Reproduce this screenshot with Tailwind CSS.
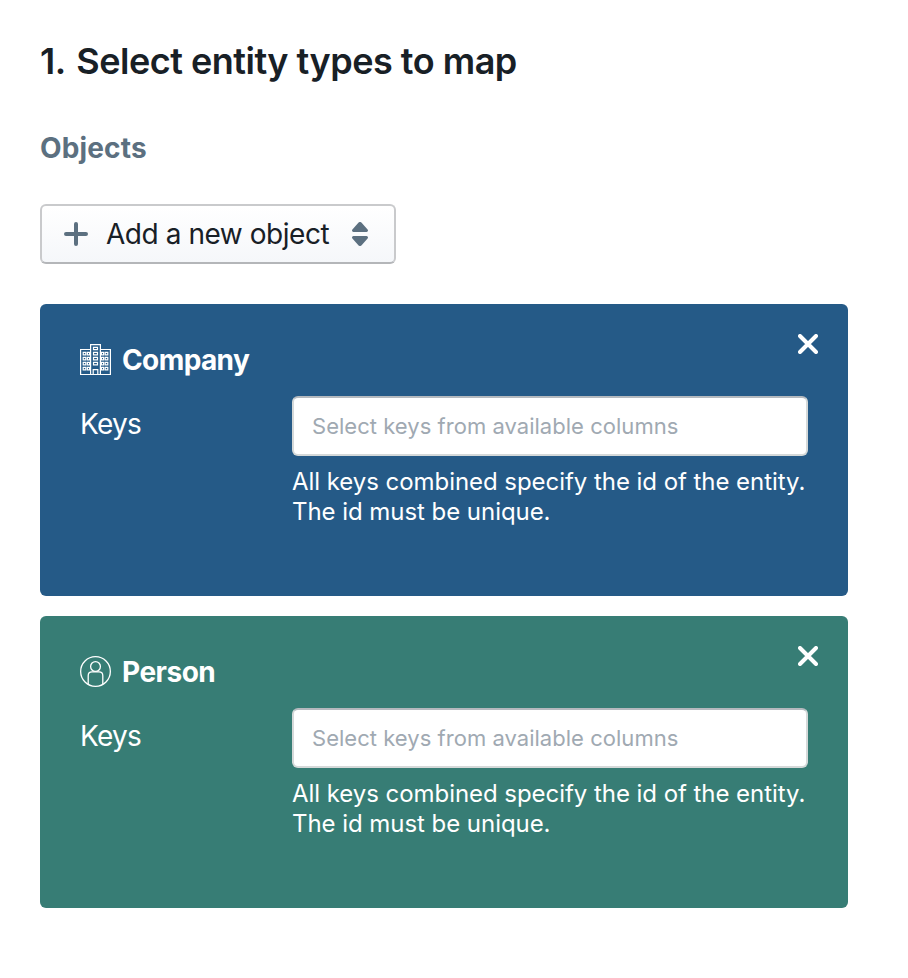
<!DOCTYPE html>
<html lang="en">
<head>
<meta charset="utf-8">
<title>Select entity types</title>
<script src="https://cdn.jsdelivr.net/npm/@tailwindcss/browser@4"></script>
</head>
<body class="bg-white font-['Inter',sans-serif] text-[#182026] antialiased">
<svg class="hidden">
  <symbol id="cross" viewBox="0 0 20 20"><path d="M2 2L18 18M18 2L2 18" fill="none" stroke="#fff" stroke-width="4" stroke-linecap="round"/></symbol>
</svg>
<main class="flex h-[978px] w-[908px] flex-col pt-[41px] pr-[60px] pl-10">
  <h1 class="h-10 text-[36px] leading-10 font-semibold tracking-[-0.5px] whitespace-nowrap"><span class="mr-[2px]">1.</span> Select entity types to map</h1>
  <h2 class="mt-[51px] h-8 text-[28px] leading-8 font-bold tracking-[0.15px] text-[#5c7080]">Objects</h2>
  <button class="mt-10 flex h-[60px] w-[356px] items-center rounded-md border-2 border-[#c9cacc] border-b-[#b4b6b9] bg-linear-to-b from-white to-[#f5f7fa] pl-[22px] text-[28px] leading-8">
    <svg class="size-6 shrink-0" viewBox="0 0 24 24"><path d="M2 12H22M12 2V22" stroke="#5c7080" stroke-width="4" stroke-linecap="round"/></svg>
    <span class="ml-[18px] w-[224px] text-left tracking-[-0.45px] whitespace-nowrap">Add a new object</span>
    <svg class="ml-[22px] h-6 w-4 shrink-0" viewBox="0 0 16 24"><path d="M1.5 10a1.5 1.5 0 0 1-1.1-2.5L6.6.6a2 2 0 0 1 2.8 0l6.2 6.9A1.5 1.5 0 0 1 14.500 10zM1.500 14a1.500 1.500 0 0 0-1.100 2.500l6.200 6.900a2 2 0 0 0 2.800 0l6.200-6.900A1.500 1.500 0 0 0 14.500 14z" fill="#5c7080"/></svg>
  </button>

  <section class="mt-10 flex h-[292px] flex-col rounded-md bg-[#255a87] px-10 pt-[30px] text-white">
    <div class="flex h-[62px] justify-between">
      <div class="flex h-[52px] items-center">
        <svg class="size-8 shrink-0" viewBox="0 0 32 32" fill="none" stroke="#fff" stroke-width="1.200">
          <path d="M10.500 5.500H.6V30.500H10.500M20.500 5.500H30.400V30.500H20.500"/>
          <path d="M10.600 30.500V.6H20.400V30.500ZM13.200 30V25.700H17.800V30"/>
          <path d="M3.200 8.300h2.600v2.600h-2.600zM7.400 8.300h2.200v2.600h-2.200zM3.200 13.300h2.600v2.600h-2.600zM7.400 13.300h2.200v2.600h-2.200zM3.200 18.300h2.600v2.600h-2.600zM7.400 18.300h2.200v2.600h-2.200zM3.200 23.300h2.600v2.600h-2.600zM7.400 23.300h2.200v2.600h-2.200zM21.400 8.300h2.200v2.600h-2.200zM25.200 8.300h2.600v2.600h-2.600zM21.400 13.300h2.200v2.600h-2.200zM25.200 13.300h2.600v2.600h-2.600zM21.400 18.300h2.200v2.600h-2.200zM25.200 18.300h2.600v2.600h-2.600zM21.400 23.300h2.200v2.600h-2.200zM25.200 23.300h2.600v2.600h-2.600z"/>
          <path d="M13.500 3.300h4v2.400h-4zM13.500 8.300h4v2.600h-4zM13.500 13.300h4v2.600h-4zM13.500 18.300h4v2.600h-4z"/>
        </svg>
        <h3 class="ml-2.5 text-[28px] leading-8 font-bold tracking-[-0.6px]">Company</h3>
      </div>
      <button aria-label="Remove Company" class="-mr-2.5 flex h-5"><svg class="size-5"><use href="#cross"/></svg></button>
    </div>
    <div class="flex">
      <div class="w-[212px] pt-3 text-[28px] leading-8 tracking-[-0.7px]">Keys</div>
      <div class="w-[516px]">
        <div class="flex h-[60px] items-center rounded-md border-2 border-[#d5d9d9] border-t-[#b5b9be] bg-white pl-[18px] text-[22px] leading-8 tracking-[0.03px] text-[#a0a9b2] whitespace-nowrap">Select keys from available columns</div>
        <p class="mt-[11px] text-[24px] leading-[30px] tracking-[-0.05px] whitespace-nowrap">All keys combined specify the id of the entity.<br>The id must be unique.</p>
      </div>
    </div>
  </section>

  <section class="mt-5 flex h-[292px] flex-col rounded-md bg-[#377d75] px-10 pt-[30px] text-white">
    <div class="flex h-[62px] justify-between">
      <div class="flex h-[52px] items-center">
        <svg class="size-8 shrink-0" viewBox="0 0 32 32" fill="none" stroke="#fff" stroke-width="1.300">
          <circle cx="15.500" cy="15.500" r="14.850"/>
          <circle cx="15.500" cy="10.500" r="4.900"/>
          <path d="M8.200 28.300V19.700Q8.200 15.900 12 15.900H19Q22.800 15.900 22.800 19.700V28.300"/>
        </svg>
        <h3 class="ml-2.5 text-[28px] leading-8 font-bold tracking-[-0.5px]">Person</h3>
      </div>
      <button aria-label="Remove Person" class="-mr-2.5 flex h-5"><svg class="size-5"><use href="#cross"/></svg></button>
    </div>
    <div class="flex">
      <div class="w-[212px] pt-3 text-[28px] leading-8 tracking-[-0.7px]">Keys</div>
      <div class="w-[516px]">
        <div class="flex h-[60px] items-center rounded-md border-2 border-[#d5d9d9] border-t-[#b5b9be] bg-white pl-[18px] text-[22px] leading-8 tracking-[0.03px] text-[#a0a9b2] whitespace-nowrap">Select keys from available columns</div>
        <p class="mt-[11px] text-[24px] leading-[30px] tracking-[-0.05px] whitespace-nowrap">All keys combined specify the id of the entity.<br>The id must be unique.</p>
      </div>
    </div>
  </section>
</main>
</body>
</html>
